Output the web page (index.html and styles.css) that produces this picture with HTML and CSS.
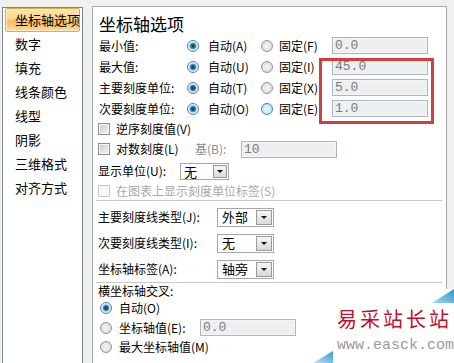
FILE: index.html
```html
<!DOCTYPE html>
<html lang="zh-CN">
<head>
<meta charset="utf-8">
<title>设置坐标轴格式</title>
<link rel="stylesheet" href="styles.css">
</head>
<body>
<div class="window">
  <ul class="nav">
    <li class="active">坐标轴选项</li>
    <li>数字</li>
    <li>填充</li>
    <li>线条颜色</li>
    <li>线型</li>
    <li>阴影</li>
    <li>三维格式</li>
    <li>对齐方式</li>
  </ul>
  <div class="panel">
    <h1 class="title">坐标轴选项</h1>
    <div class="bounds">
      <div class="brow">
        <span class="lbl">最小值:</span>
        <span class="opt o1"><span class="radio on"></span>自动(A)</span>
        <span class="opt o2"><span class="radio"></span>固定(F)</span>
        <span class="field">0.0</span>
      </div>
      <div class="brow">
        <span class="lbl">最大值:</span>
        <span class="opt o1"><span class="radio on"></span>自动(U)</span>
        <span class="opt o2"><span class="radio"></span>固定(I)</span>
        <span class="field">45.0</span>
      </div>
      <div class="brow">
        <span class="lbl">主要刻度单位:</span>
        <span class="opt o1"><span class="radio on"></span>自动(T)</span>
        <span class="opt o2"><span class="radio"></span>固定(X)</span>
        <span class="field">5.0</span>
      </div>
      <div class="brow">
        <span class="lbl">次要刻度单位:</span>
        <span class="opt o1"><span class="radio on"></span>自动(O)</span>
        <span class="opt o2"><span class="radio hover"></span>固定(E)</span>
        <span class="field">1.0</span>
      </div>
      <div class="redbox"></div>
    </div>

    <div class="crow">
      <span class="cbx"></span><span>逆序刻度值(V)</span>
    </div>
    <div class="crow">
      <span class="cpart"><span class="cbx"></span><span>对数刻度(L)</span></span>
      <span class="base">基(B):</span>
      <span class="field">10</span>
    </div>
    <div class="urow">
      <span class="ulbl">显示单位(U):</span>
      <span class="select sel-unit"><span class="sv">无</span><span class="sbtn"></span></span>
    </div>
    <div class="crow drow">
      <span class="cbx dis"></span><span>在图表上显示刻度单位标签(S)</span>
    </div>
    <div class="sep"></div>

    <div class="ticks">
      <div class="trow">
        <span class="tlbl">主要刻度线类型(J):</span>
        <span class="select sel-tick"><span class="sv">外部</span><span class="sbtn"></span></span>
      </div>
      <div class="trow">
        <span class="tlbl">次要刻度线类型(I):</span>
        <span class="select sel-tick"><span class="sv">无</span><span class="sbtn"></span></span>
      </div>
      <div class="trow">
        <span class="tlbl">坐标轴标签(A):</span>
        <span class="select sel-tick"><span class="sv">轴旁</span><span class="sbtn"></span></span>
      </div>
    </div>
    <div class="sep sep2"></div>

    <div class="cross">
      <div class="cross-title">横坐标轴交叉:</div>
      <div class="rrow">
        <span class="radio on"></span><span>自动(O)</span>
      </div>
      <div class="rrow mid">
        <span class="rpart"><span class="radio"></span><span>坐标轴值(E):</span></span>
        <span class="field">0.0</span>
      </div>
      <div class="rrow">
        <span class="radio"></span><span>最大坐标轴值(M)</span>
      </div>
    </div>
  </div>
</div>

<div class="watermark">
  <svg class="tri tri-top" width="22" height="14" viewBox="0 0 22 14">
    <defs>
      <linearGradient id="g1" x1="0" y1="1" x2="1" y2="0">
        <stop offset="0" stop-color="#a9d9f2"/>
        <stop offset="1" stop-color="#2a94d0"/>
      </linearGradient>
    </defs>
    <polygon points="0,14 22,0 22,14" fill="url(#g1)"/>
  </svg>
  <div class="wm-cn">易采站长站</div>
  <div class="wm-url">www.easck.com</div>
  <svg class="tri tri-bot" width="20" height="12" viewBox="0 0 20 12">
    <defs>
      <linearGradient id="g2" x1="0" y1="1" x2="1" y2="0">
        <stop offset="0" stop-color="#bfe3f5"/>
        <stop offset="1" stop-color="#2f98d3"/>
      </linearGradient>
    </defs>
    <polygon points="0,12 20,0 20,12" fill="url(#g2)"/>
  </svg>
</div>
</body>
</html>
```

FILE: styles.css
```css
* { box-sizing: border-box; }

html, body {
  margin: 0;
  padding: 0;
}

body {
  width: 454px;
  height: 363px;
  overflow: hidden;
  position: relative;
  background: #f0f0f0;
  font-family: "Noto Sans CJK SC", "Noto Sans", sans-serif;
  font-size: 12px;
  color: #000;
}

.window {
  display: flex;
  align-items: flex-start;
  height: 363px;
  overflow: hidden;
}

/* left navigation list */
.nav {
  list-style: none;
  margin: 7px 0 0 2px;
  padding: 0 2px;
  width: 81px;
  height: 356px;
  background: #fff;
  border: 1px solid #7f858c;
  border-bottom: none;
  font-size: 13px;
}

.nav li {
  height: 24px;
  line-height: 24px;
  padding-left: 10px;
  white-space: nowrap;
}

.nav li.active {
  padding-left: 9px;
  line-height: 22px;
  border: 1px solid #e2a847;
  border-radius: 2px;
  background: linear-gradient(#fde7b0 0%, #fbd58a 45%, #f8bf5e 55%, #fbd897 100%);
  box-shadow: inset 0 0 0 1px rgba(255, 246, 220, 0.7);
}

/* right panel */
.panel {
  margin: 6px 0 0 9px;
  width: 355px;
  height: 357px;
  background: #fff;
  border: 1px solid #a8a8a8;
  border-bottom: none;
  padding: 0 0 0 5px;
}

.title {
  margin: 0;
  padding: 6px 0 0 1px;
  height: 28px;
  font-size: 17px;
  line-height: 22px;
  font-weight: normal;
}

.bounds {
  position: relative;
}

.brow {
  display: grid;
  grid-template-columns: 89px 74px 71px 96px;
  height: 21px;
  align-items: center;
  line-height: 16px;
}

.lbl { padding-left: 1px; white-space: nowrap; }

.opt {
  display: flex;
  align-items: center;
  white-space: nowrap;
}

.o1 .radio { margin-right: 9px; }
.o2 .radio { margin-right: 6px; }

.redbox {
  position: absolute;
  left: 221px;
  top: 23px;
  width: 115px;
  height: 66px;
  border: 3px solid #d63d3f;
}

/* form controls */
.radio {
  flex: none;
  display: inline-block;
  width: 12px;
  height: 12px;
  border-radius: 50%;
  border: 1px solid #949494;
  background: radial-gradient(circle, #f6f6f6 0, #e4e4e4 55%, #d0d0d0 100%);
}

.radio.on {
  border-color: #5a7d98;
  background: radial-gradient(circle, #0c3654 0, #1c6291 1.8px, #4fa3d6 3px, #cfe3f1 3.7px, #f0f0f0 5px);
}

.radio.hover {
  border-color: #3d8ac0;
  background: radial-gradient(circle, #eef8fe 0, #c6e7f8 60%, #a3d6f2 100%);
}

.cbx {
  flex: none;
  display: inline-block;
  width: 12px;
  height: 12px;
  margin-right: 6px;
  border: 1px solid #8e8e8e;
  background: linear-gradient(135deg, #c9cdd2, #f3f3f3);
  box-shadow: inset 0 0 0 1px #f6f6f6;
}

.cbx.dis {
  border-color: #c8c8c8;
  background: #f7f7f7;
  box-shadow: none;
}

.field {
  display: inline-block;
  width: 96px;
  height: 17px;
  padding-left: 2px;
  border: 1px solid #a9b6c9;
  background: #eeeff1;
  box-shadow: inset 0 0 0 1px #f5f5f5;
  font-family: "Liberation Mono", monospace;
  font-size: 13px;
  line-height: 15px;
  color: #7a7a7a;
}

.crow {
  display: flex;
  align-items: center;
  height: 20px;
  line-height: 16px;
  white-space: nowrap;
}

.cpart {
  display: flex;
  align-items: center;
  width: 97px;
}

.base {
  width: 46px;
  color: #8c8c8c;
}

.urow {
  display: flex;
  align-items: center;
  height: 24px;
  line-height: 16px;
}

.ulbl { width: 82px; white-space: nowrap; }

.drow {
  height: 16px;
  color: #a8a8a8;
}

.select {
  display: inline-flex;
  align-items: stretch;
  height: 19px;
  border: 1px solid #a3a8ae;
  background: #fff;
}

.sel-unit { width: 49px; height: 17px; }
.sel-tick { width: 57px; }

.sv {
  flex: 1;
  padding-left: 4px;
  font-size: 13px;
  line-height: 16px;
}

.sel-unit .sv { line-height: 15px; padding-left: 3px; }

.sbtn {
  position: relative;
  width: 16px;
  margin: 1px;
  border: 1px solid #9a9a9a;
  background: linear-gradient(#f5f5f5, #d9d9d9);
}

.sel-unit .sbtn { width: 14px; }

.sbtn::after {
  content: "";
  position: absolute;
  left: 50%;
  top: 50%;
  margin: -1px 0 0 -3px;
  border-left: 3px solid transparent;
  border-right: 3px solid transparent;
  border-top: 3px solid #111;
}

.sep {
  height: 1px;
  margin: 1px 4px 0 -2px;
  background: #c9c9c9;
}

.sep2 { margin-top: 0; }

.ticks { padding-top: 3px; }

.trow {
  display: flex;
  align-items: center;
  height: 26px;
  line-height: 16px;
}

.tlbl { width: 119px; white-space: nowrap; }

.cross { line-height: 16px; }

.cross-title {
  height: 15px;
  line-height: 15px;
}

.rrow {
  display: flex;
  align-items: center;
  height: 20px;
  padding-left: 2px;
  white-space: nowrap;
}

.rrow.mid { height: 19px; }

.rrow .radio { margin-right: 7px; }

.rpart {
  display: flex;
  align-items: center;
  width: 100px;
}

/* watermark overlay */
.watermark {
  position: absolute;
  left: 312px;
  top: 289px;
  width: 142px;
  height: 74px;
  background: #fff;
}

.tri { position: absolute; display: block; }
.tri-top { right: 0; top: 0; }
.tri-bot { left: 1px; bottom: 0; }

.wm-cn {
  position: absolute;
  left: 25px;
  top: 20px;
  font-size: 20px;
  line-height: 20px;
  letter-spacing: 3px;
  color: #c0102c;
  white-space: nowrap;
}

.wm-url {
  position: absolute;
  left: 25px;
  top: 49px;
  font-family: "Liberation Mono", monospace;
  font-size: 15px;
  line-height: 15px;
  color: #9a9a9a;
  white-space: nowrap;
}
```
